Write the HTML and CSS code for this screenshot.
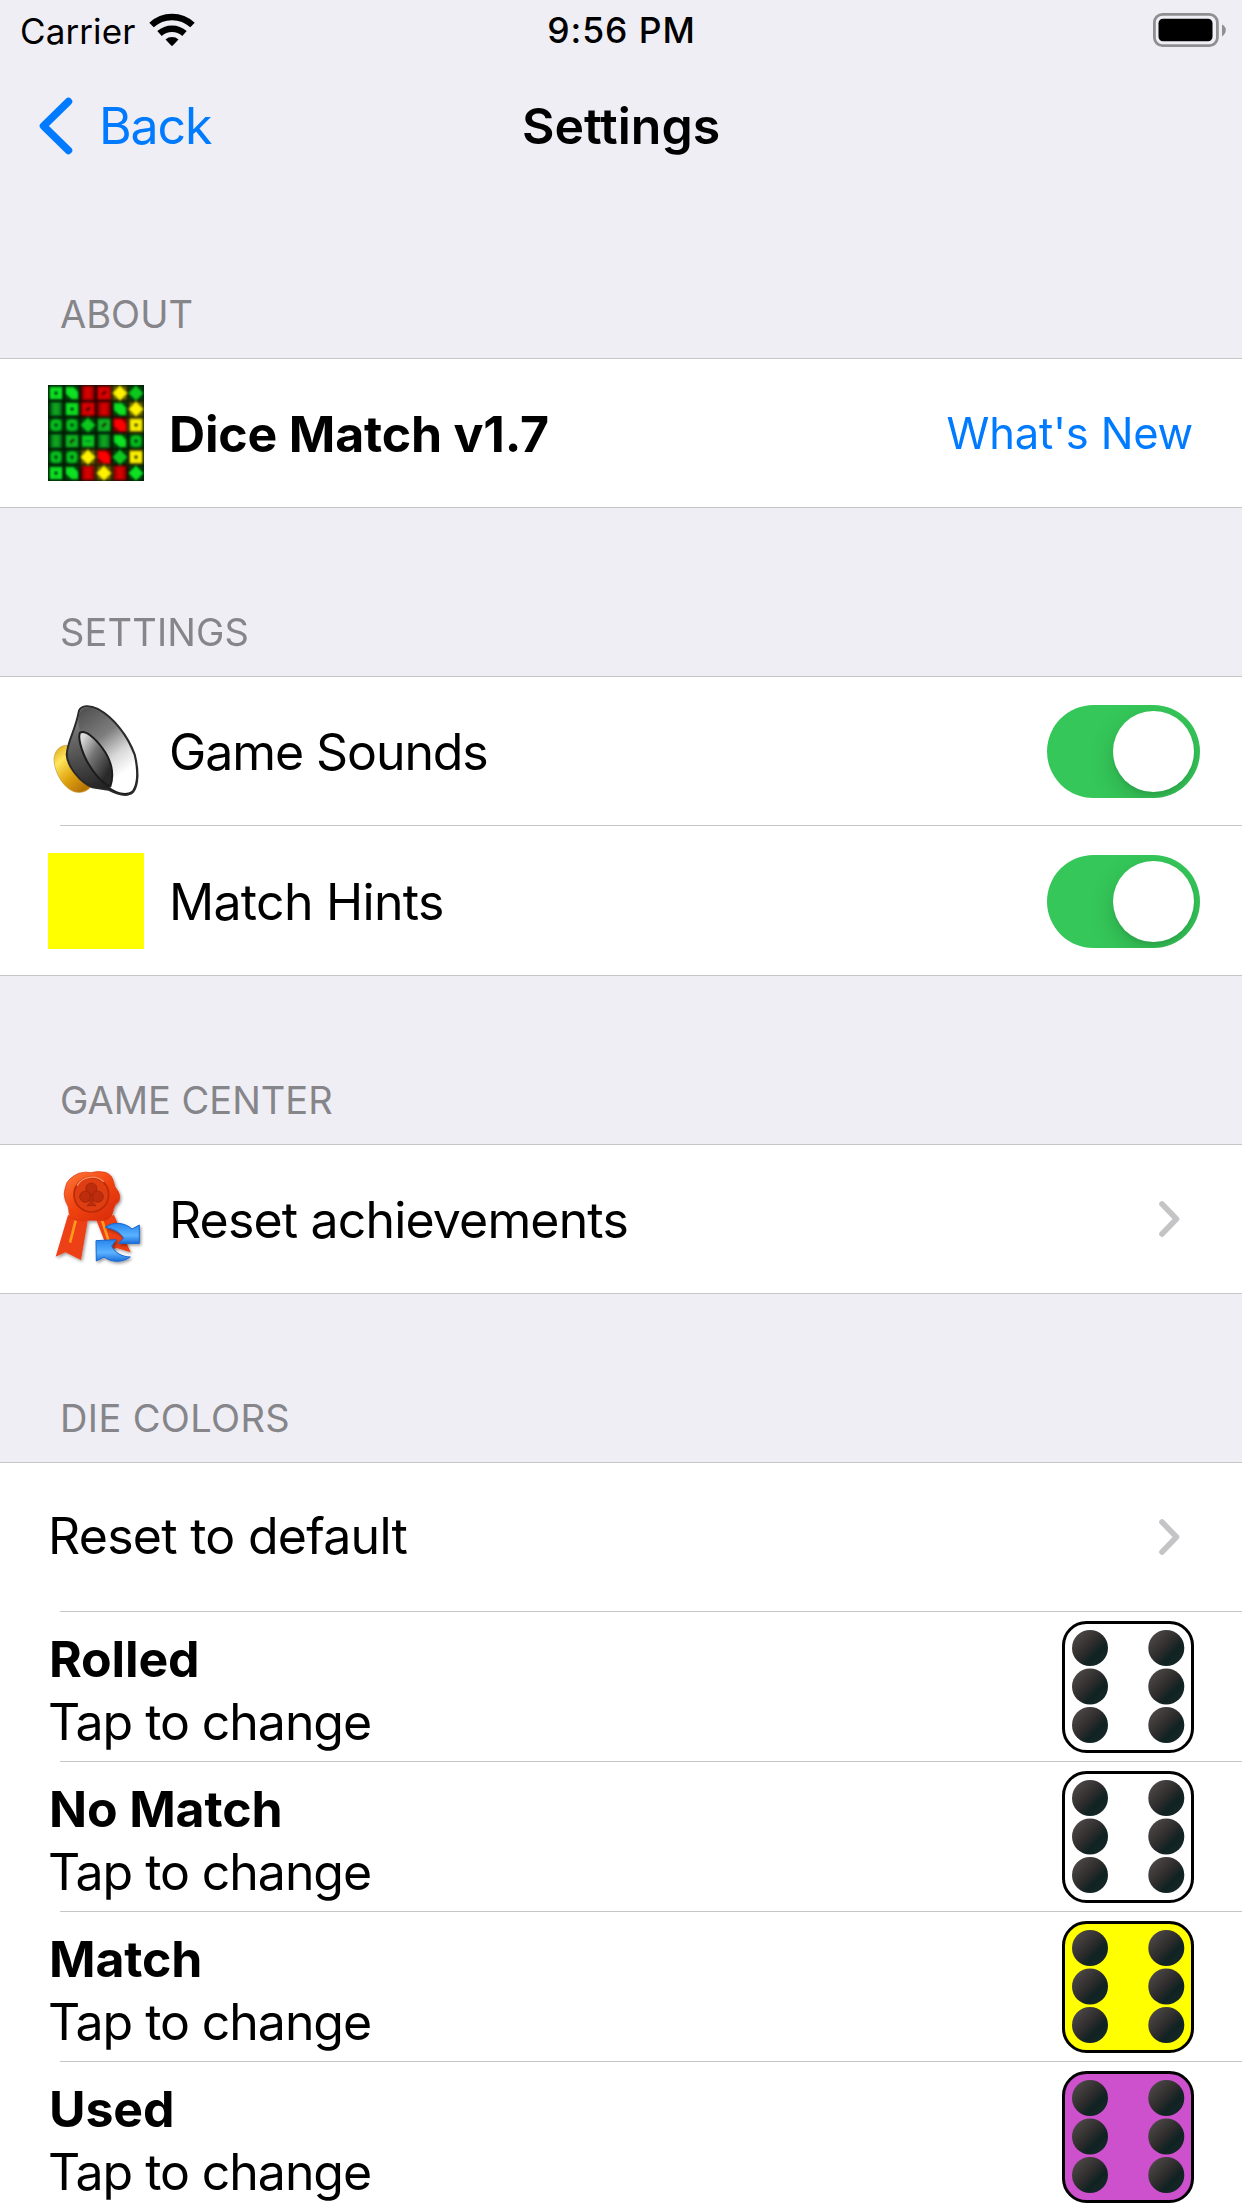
FILE: index.html
```html
<!DOCTYPE html>
<html lang="en">
<head>
<meta charset="utf-8">
<title>Settings</title>
<link rel="stylesheet" href="styles.css">
</head>
<body>
<svg class="defs" width="0" height="0" aria-hidden="true">
  <defs>
    <linearGradient id="pip" x1="0.15" y1="0.15" x2="0.8" y2="0.8">
      <stop offset="0" stop-color="#4a4545"/>
      <stop offset="0.5" stop-color="#2e2c2c"/>
      <stop offset="0.8" stop-color="#102222"/>
      <stop offset="1" stop-color="#132525"/>
    </linearGradient>
    <symbol id="chevron" viewBox="0 0 22 38">
      <path d="M4 4 18.5 19 4 34" fill="none" stroke="#c4c4c6" stroke-width="5.6" stroke-linecap="round" stroke-linejoin="round"/>
    </symbol>
    <symbol id="six" viewBox="0 0 132 132">
      <rect x="1.5" y="1.5" width="129" height="129" rx="23" fill="currentColor" stroke="#000" stroke-width="3"/>
      <g fill="url(#pip)">
        <circle cx="28" cy="27" r="18"/><circle cx="28" cy="65.500" r="18"/><circle cx="28" cy="104" r="18"/>
        <circle cx="104.300" cy="27" r="18"/><circle cx="104.300" cy="65.500" r="18"/><circle cx="104.300" cy="104" r="18"/>
      </g>
    </symbol>
    <filter id="soft" x="-20%" y="-20%" width="140%" height="140%"><feGaussianBlur stdDeviation="5"/></filter>
    <filter id="softer" x="-20%" y="-20%" width="140%" height="140%"><feGaussianBlur stdDeviation="3.400"/></filter>
    <g id="sq"><rect x="6" y="6" width="36" height="36" fill="currentColor"/><rect x="19" y="19" width="10" height="10" fill="#001a00"/></g>
    <g id="diag"><path d="M6 6H29L42 20V42H23L6 27Z" fill="currentColor"/></g>
    <g id="slash"><path d="M6 6H42V42H6Z" fill="currentColor"/><path d="M18 30 30 18" stroke="#200" stroke-width="7"/></g>
    <g id="bar"><path d="M9 4H39V44H9Z" fill="currentColor" opacity=".72"/><path d="M24 7V41" stroke="currentColor" stroke-width="8"/></g>
    <g id="plus"><path d="M24 1 33 13 47 24 35 35 24 47 13 35 1 24 13 13Z" fill="currentColor"/><circle cx="24" cy="24" r="16" fill="currentColor"/></g>
    <g id="ring"><rect x="7" y="6" width="34" height="36" rx="12" fill="currentColor" opacity=".7"/><circle cx="24" cy="24" r="11" fill="none" stroke="currentColor" stroke-width="5" opacity=".6"/><circle cx="24" cy="24" r="6" fill="#031"/></g>
    <g id="full"><rect x="6" y="7" width="36" height="34" fill="currentColor" opacity=".85"/><path d="M15 24H33" stroke="#063" stroke-width="4"/></g>
  </defs>
</svg>

<header class="status-bar">
  <div class="carrier"><span>Carrier</span>
    <svg width="46" height="34" viewBox="0 0 46 34">
      <g fill="none" stroke="#000" stroke-width="6.500">
        <path d="M2.500 12A30 30 0 0 1 43.500 12"/>
        <path d="M10.500 20.500A18.500 18.500 0 0 1 35.500 20.500"/>
      </g>
      <path d="M16.500 26.500A10 10 0 0 1 29.500 26.500L23.800 32.600Q23 33.400 22.200 32.600Z"/>
    </svg>
  </div>
  <div class="time">9:56 PM</div>
  <svg class="battery" width="74" height="34" viewBox="0 0 74 34">
    <rect x="1.400" y="1.400" width="63" height="31.200" rx="8" fill="none" stroke="#8f8f92" stroke-width="2.800"/>
    <rect x="5.500" y="5.800" width="54" height="22.400" rx="4.500"/>
    <path d="M69 11.500Q72.800 13.500 72.800 17T69 23.500Z" fill="#8f8f92"/>
  </svg>
</header>

<nav class="nav-bar">
  <a class="back">
    <svg width="34" height="58" viewBox="0 0 34 58"><path d="M29.500 4.500 4.500 29 29.500 53.500" fill="none" stroke="#007aff" stroke-width="7.500" stroke-linecap="round" stroke-linejoin="round"/></svg>
    <span>Back</span>
  </a>
  <h1>Settings</h1>
</nav>

<main>
  <section>
    <h2 class="about">About</h2>
    <ul>
      <li>
        <svg class="icon" viewBox="0 0 288 288">
          <rect width="288" height="288" fill="#043d0d"/>
          <g filter="url(#soft)">
            <path d="M96 0H192V96H96ZM192 96H240V144H192ZM144 192H192V240H144ZM96 240H144V288H96ZM192 240H240V288H192Z" fill="#6a0000"/>
            <path d="M192 0H240V48H192ZM240 48H288V144H240ZM96 192H144V240H96ZM240 192H288V240H240ZM144 240H192V288H144Z" fill="#5d5a00"/>
          </g>
          <path d="M0 48H288M0 96H288M0 144H288M0 192H288M0 240H288M48 0V288M96 0V288M144 0V288M192 0V288M240 0V288M0 0H288V288H0Z" fill="none" stroke="#000" stroke-width="6" opacity=".6" filter="url(#softer)"/>
          <g filter="url(#softer)">
            <g color="#0ae222">
              <use href="#sq"/><use href="#diag" x="48"/><use href="#plus" x="240" color="#08c81d"/>
              <use href="#bar" y="48" color="#0cae22"/><use href="#sq" x="48" y="48"/><use href="#diag" x="192" y="48"/>
              <use href="#ring" y="96"/><use href="#ring" x="48" y="96"/><use href="#plus" x="96" y="96" color="#08c81d"/><use href="#slash" x="144" y="96" color="#0bb622"/>
              <use href="#bar" y="144" color="#0cae22"/><use href="#slash" x="48" y="144" color="#0bb622"/><use href="#full" x="96" y="144"/><use href="#bar" x="144" y="144" color="#0cae22"/><use href="#diag" x="192" y="144"/><use href="#ring" x="240" y="144"/>
              <use href="#ring" y="192"/><use href="#ring" x="48" y="192"/><use href="#plus" x="192" y="192" color="#08c81d"/>
              <use href="#sq" y="240"/><use href="#diag" x="48" y="240"/><use href="#plus" x="240" y="240"/>
            </g>
            <g color="#e00000">
              <use href="#bar" x="96"/><use href="#slash" x="144"/><use href="#slash" x="96" y="48"/><use href="#bar" x="144" y="48"/>
              <use href="#diag" x="192" y="96" color="#ff0505"/><use href="#diag" x="144" y="192" color="#ff0505"/>
              <use href="#bar" x="96" y="240"/><use href="#bar" x="192" y="240"/>
            </g>
            <g color="#fff200">
              <use href="#plus" x="192"/><use href="#plus" x="240" y="48"/><use href="#sq" x="240" y="96"/>
              <use href="#plus" x="96" y="192"/><use href="#sq" x="240" y="192"/><use href="#plus" x="144" y="240"/>
            </g>
          </g>
        </svg>
        <span class="label title">Dice Match v1.7</span>
        <a class="link">What's New</a>
      </li>
    </ul>
  </section>

  <section>
    <h2 class="settings">Settings</h2>
    <ul>
      <li>
        <svg class="icon" viewBox="24 39 288 288">
          <defs>
            <linearGradient id="gold" x1="0" y1="0" x2=".7" y2="1"><stop offset="0" stop-color="#d79c10"/><stop offset=".3" stop-color="#ffe75c"/><stop offset=".65" stop-color="#e0a512"/><stop offset="1" stop-color="#b87405"/></linearGradient>
            <linearGradient id="cone" x1=".2" y1="0" x2=".7" y2="1"><stop offset="0" stop-color="#555"/><stop offset=".35" stop-color="#7d7d7d"/><stop offset=".62" stop-color="#d8d8d8"/><stop offset=".85" stop-color="#fff"/></linearGradient>
            <linearGradient id="body" x1=".3" y1="0" x2=".6" y2="1"><stop offset="0" stop-color="#8a8a8a"/><stop offset=".45" stop-color="#555"/><stop offset="1" stop-color="#181818"/></linearGradient>
            <linearGradient id="core" x1=".1" y1=".1" x2=".8" y2=".8"><stop offset="0" stop-color="#dcdcdc"/><stop offset=".45" stop-color="#757575"/><stop offset="1" stop-color="#2b2b2b"/></linearGradient>
            <filter id="edge"><feGaussianBlur stdDeviation="1.800"/></filter>
          </defs>
          <g filter="url(#edge)">
            <path d="M80 166C60 166 43 183 42 208C43 250 75 303 112 307Q137 309 152 291L110 245Z" fill="url(#gold)" stroke="#c99a35" stroke-width="2"/>
            <path d="M117 62C124 45 150 45 173 57C220 82 264 137 284 193C296 240 296 285 279 306C262 322 230 312 205 299L157 292C120 277 82 229 80 194C83 150 107 120 117 62Z" fill="url(#body)" stroke="#292929" stroke-width="6"/>
            <path d="M121 63C130 48 153 51 172 60C218 84 260 138 281 195C292 241 291 283 276 302C257 316 229 306 207 290C218 270 219 239 207 209C187 166 150 126 123 124C113 111 113 83 121 63Z" fill="url(#cone)"/>
            <path d="M120 128C137 120 164 143 187 174C214 210 224 252 211 289C180 279 135 220 121 162Q115 139 120 128Z" fill="url(#core)" stroke="#1c1c1c" stroke-width="6"/>
          </g>
        </svg>
        <span class="label sounds">Game Sounds</span>
        <span class="switch"></span>
      </li>
      <li>
        <span class="icon swatch"></span>
        <span class="label hints">Match Hints</span>
        <span class="switch"></span>
      </li>
    </ul>
  </section>

  <section>
    <h2>Game Center</h2>
    <ul>
      <li>
        <svg class="icon" viewBox="24 33 288 288">
          <defs>
            <linearGradient id="wax" x1="0" y1="0" x2=".8" y2="1"><stop offset="0" stop-color="#ff7a3c"/><stop offset=".5" stop-color="#f24512"/><stop offset="1" stop-color="#d92c05"/></linearGradient>
            <linearGradient id="blue" x1="0" y1="0" x2="0" y2="1"><stop offset="0" stop-color="#2685ee"/><stop offset=".6" stop-color="#5bb2ff"/><stop offset="1" stop-color="#1b6fdc"/></linearGradient>
            <filter id="shade" x="-20%" y="-20%" width="150%" height="150%"><feDropShadow dx="4" dy="5" stdDeviation="4" flood-opacity=".4"/></filter>
          </defs>
          <g filter="url(#shade)">
            <path d="M84 165 47 290 76 277 123 300 143 183Z" fill="#ee3f18"/>
            <path d="M168 178 205 272 230 264 272 277 222 165Z" fill="#ee3f18"/>
            <path d="M107 182 90 248M186 180 205 240" stroke="#ff9a1f" stroke-width="8" fill="none"/>
            <path d="M116 40Q138 34 153 38Q174 32 196 37Q216 43 221 67Q223 82 234 93Q243 106 237 124Q220 138 219 155Q214 178 190 182Q167 180 148 181Q125 187 101 177Q87 171 87 157Q88 142 77 124Q68 102 77 79Q81 56 116 40Z" fill="url(#wax)" stroke="#dd3410" stroke-width="2"/>
          </g>
          <circle cx="154" cy="104" r="52" fill="#df3d12" stroke="#bb2a08" stroke-width="5"/>
          <path d="M111 77A52 52 0 0 1 191 65" stroke="#ff9463" stroke-width="4" fill="none"/>
          <g fill="#bd2d0d" stroke="#9c2208" stroke-width="2"><circle cx="154" cy="86" r="17"/><circle cx="136" cy="110" r="17"/><circle cx="173" cy="110" r="17"/><path d="M151 105H158L159 127 168 137H141L150 127Z"/></g>
          <g filter="url(#shade)" fill="url(#blue)" stroke="#1768cf" stroke-width="3" stroke-linejoin="round">
            <path d="M195 202C219 184 254 187 276 207L298 195V250H235L251 235C241 217 222 207 195 202Z"/>
            <path d="M271 291C244 310 212 306 192 291L169 303 168 242 229 239 215 258C225 280 247 290 271 291Z"/>
          </g>
        </svg>
        <span class="label achievements">Reset achievements</span>
        <svg class="disclosure"><use href="#chevron"/></svg>
      </li>
    </ul>
  </section>

  <section>
    <h2 class="colors">Die Colors</h2>
    <ul>
      <li>
        <span class="label reset">Reset to default</span>
        <svg class="disclosure"><use href="#chevron"/></svg>
      </li>
      <li>
        <div class="pair"><strong>Rolled</strong><span>Tap to change</span></div>
        <svg class="die white"><use href="#six"/></svg>
      </li>
      <li>
        <div class="pair"><strong>No Match</strong><span>Tap to change</span></div>
        <svg class="die white"><use href="#six"/></svg>
      </li>
      <li>
        <div class="pair"><strong>Match</strong><span>Tap to change</span></div>
        <svg class="die yellow"><use href="#six"/></svg>
      </li>
      <li>
        <div class="pair"><strong>Used</strong><span>Tap to change</span></div>
        <svg class="die purple"><use href="#six"/></svg>
      </li>
    </ul>
  </section>
</main>
</body>
</html>
```
FILE: styles.css
```css
* {
  box-sizing: border-box;
}

body {
  margin: 0;
  width: 1242px;
  height: 2208px;
  overflow: hidden;
  background: #efeef4;
  color: #000;
  font-family: Inter, "Liberation Sans", sans-serif;
  font-size: 50px;
  line-height: 60px;
}

svg {
  display: block;
  flex: none;
}

.defs {
  position: absolute;
}

/* Status bar */
.status-bar {
  display: grid;
  grid-template-columns: 1fr auto 1fr;
  height: 60px;
  padding: 10px 15px 0 20px;
  font-size: 35px;
  line-height: 42px;
}

.carrier {
  display: flex;
  gap: 14px;
  letter-spacing: 0.1px;
}

.carrier svg {
  margin-top: 3px;
}

.time {
  margin-left: -4px;
  font-size: 35.5px;
  font-weight: 500;
  letter-spacing: 0.9px;
}

.battery {
  justify-self: end;
  margin-top: 3px;
}

/* Navigation bar */
.nav-bar {
  display: grid;
  grid-template-columns: 1fr auto 1fr;
  height: 130px;
  padding: 36px 39px 0;
}

.nav-bar h1 {
  margin: 0;
  font-size: 50px;
  font-weight: 600;
}

.back {
  display: flex;
  gap: 26px;
  color: #007aff;
  letter-spacing: -1.1px;
}

.back svg {
  margin-top: 1px;
}

/* Grouped table */
h2 {
  display: flex;
  align-items: flex-end;
  height: 168px;
  margin: 0;
  padding: 0 60px 21px;
  color: #85858a;
  font-size: 38px;
  font-weight: 400;
  line-height: 46px;
  text-transform: uppercase;
}

.about {
  letter-spacing: 0;
}

.settings {
  letter-spacing: 0.15px;
}

.colors {
  letter-spacing: 0.38px;
}

ul {
  margin: 0;
  padding: 0;
  list-style: none;
  background: #fff;
  border-top: 1px solid #c6c6c8;
  border-bottom: 1px solid #c6c6c8;
}

li {
  display: flex;
  align-items: center;
  height: 148px;
  padding: 0 48px;
}

li + li {
  height: 150px;
  padding-top: 2px;
  background: linear-gradient(#c6c6c8, #c6c6c8) 60px 0 / 100% 1px no-repeat;
}

.icon {
  flex: none;
  width: 96px;
  height: 96px;
  margin-right: 24px;
}

.swatch {
  background: #ff0;
}

.label {
  flex: 1;
  padding-top: 2px;
}

.title {
  margin-left: 1px;
  font-weight: 700;
  letter-spacing: -0.18px;
}

.sounds {
  margin-left: 1px;
  letter-spacing: -1.08px;
}

.hints {
  margin-left: 1px;
  letter-spacing: -0.7px;
}

.achievements {
  margin-left: 1px;
  letter-spacing: -0.84px;
}

.reset {
  padding: 0 0 2px;
  letter-spacing: -0.73px;
}

.link {
  color: #007aff;
  font-size: 43.5px;
  line-height: 52px;
  letter-spacing: -0.2px;
  margin-right: 1px;
}

.switch {
  display: flex;
  justify-content: flex-end;
  width: 153px;
  height: 93px;
  margin: 1px -6px 0 0;
  padding: 6px;
  border-radius: 47px;
  background: #35c759;
  overflow: hidden;
}

.switch::after {
  content: "";
  width: 81px;
  height: 81px;
  border-radius: 50%;
  background: #fff;
  box-shadow: 0 9px 24px rgba(0, 0, 0, 0.17), 0 3px 3px rgba(0, 0, 0, 0.06);
}

.disclosure {
  width: 22px;
  height: 38px;
  margin-right: 14px;
}

.pair {
  display: flex;
  flex: 1;
  flex-direction: column;
  padding-top: 7px;
  line-height: 63px;
}

.pair span {
  letter-spacing: -1.06px;
}

.pair strong {
  padding-left: 1px;
  letter-spacing: -0.15px;
}

.die {
  width: 132px;
  height: 132px;
}

.white {
  color: #fff;
}

.yellow {
  color: #ff0;
}

.purple {
  color: #cd51cd;
}
```
